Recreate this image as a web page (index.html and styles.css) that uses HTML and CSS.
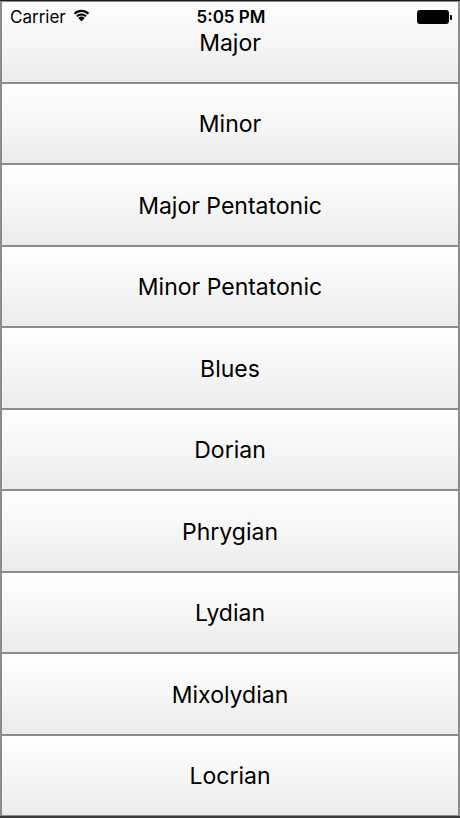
FILE: index.html
```html
<!DOCTYPE html>
<html lang="en">
<head>
    <meta charset="UTF-8">
    <meta name="viewport" content="width=device-width, initial-scale=1.0">
    <title>Scales</title>
    <link rel="stylesheet" href="styles.css">
</head>
<body>
    <div class="screen">
        <div class="status-bar">
            <div class="carrier">
                Carrier
                <svg class="wifi" width="17" height="13" viewBox="0 0 17 13">
                    <path d="M8.5 12.5 L5.3 8.9 A4.6 4.6 0 0 1 11.7 8.9 Z" fill="#000"/>
                    <path d="M3.2 6.6 A7.6 7.6 0 0 1 13.8 6.6 L12.4 8.1 A5.6 5.6 0 0 0 4.6 8.1 Z" fill="#000"/>
                    <path d="M0.8 4 A11 11 0 0 1 16.2 4 L14.8 5.6 A8.9 8.9 0 0 0 2.2 5.6 Z" fill="#000"/>
                </svg>
            </div>
            <div class="time">5:05 PM</div>
            <div class="battery">
                <span class="battery-body"></span>
                <span class="battery-nub"></span>
            </div>
        </div>

        <div class="scale-list">
            <button type="button" class="scale-btn">Major</button>
            <button type="button" class="scale-btn">Minor</button>
            <button type="button" class="scale-btn">Major Pentatonic</button>
            <button type="button" class="scale-btn">Minor Pentatonic</button>
            <button type="button" class="scale-btn">Blues</button>
            <button type="button" class="scale-btn">Dorian</button>
            <button type="button" class="scale-btn">Phrygian</button>
            <button type="button" class="scale-btn">Lydian</button>
            <button type="button" class="scale-btn">Mixolydian</button>
            <button type="button" class="scale-btn">Locrian</button>
        </div>
    </div>
</body>
</html>
```

FILE: styles.css
```css
html, body {
    margin: 0;
    padding: 0;
    background-color: #1e1e1e;
}
.screen {
    position: relative;
    width: 460px;
    height: 818px;
    box-sizing: border-box;
    border-top: 1px solid #1e1e1e;
    border-bottom: 2px solid #3a3a3a;
    background-color: #fff;
    font-family: Inter, "Noto Sans", sans-serif;
}

/* status bar sits on top of the first button */
.status-bar {
    position: absolute;
    top: 0;
    left: 0;
    right: 0;
    height: 32px;
    display: flex;
    align-items: center;
    justify-content: space-between;
    padding: 0 8px 0 10px;
    color: #000;
    z-index: 2;
    pointer-events: none;
}
.carrier {
    display: flex;
    align-items: center;
    gap: 7px;
    font-size: 17px;
    width: 140px;
}
.wifi {
    margin-top: -3px;
}
.time {
    font-size: 17px;
    font-weight: 600;
}
.battery {
    width: 140px;
    display: flex;
    align-items: center;
    justify-content: flex-end;
}
.battery-body {
    width: 32px;
    height: 14px;
    background-color: #000;
    border-radius: 3px;
}
.battery-nub {
    width: 2px;
    height: 5px;
    margin-left: 1px;
    background-color: #000;
    border-radius: 0 1px 1px 0;
}

.scale-list {
    display: flex;
    flex-direction: column;
    height: 100%;
}
.scale-btn {
    flex: 1;
    margin: 0;
    padding: 2px 0 0;
    border: 1px solid #8c8c8c;
    border-left-width: 2px;
    border-right-width: 2px;
    background: linear-gradient(to bottom, #fefefe 0%, #f6f6f6 50%, #ebebeb 100%);
    font-family: Inter, "Noto Sans", sans-serif;
    font-size: 23px;
    color: #000;
    text-align: center;
    cursor: pointer;
}
.scale-btn:active {
    background: #d8d8d8;
}
```
